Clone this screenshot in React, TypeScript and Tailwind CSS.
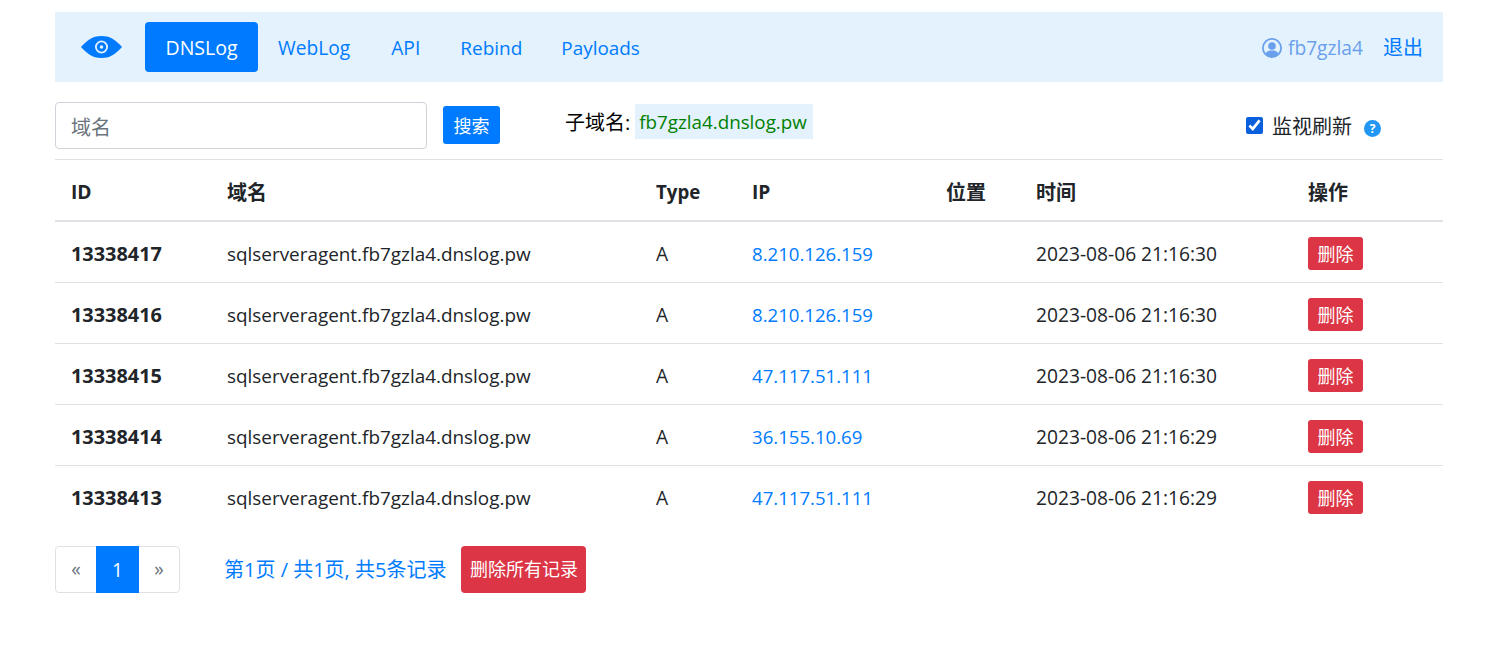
import React from 'react';

const rows = [
  { id: '13338417', ip: '8.210.126.159', time: '2023-08-06 21:16:30' },
  { id: '13338416', ip: '8.210.126.159', time: '2023-08-06 21:16:30' },
  { id: '13338415', ip: '47.117.51.111', time: '2023-08-06 21:16:30' },
  { id: '13338414', ip: '36.155.10.69', time: '2023-08-06 21:16:29' },
  { id: '13338413', ip: '47.117.51.111', time: '2023-08-06 21:16:29' },
];

const headers = [
  { label: 'ID', size: 'text-[19.2px]' },
  { label: '域名', size: 'text-[20px]' },
  { label: 'Type', size: 'text-[18.7px]' },
  { label: 'IP', size: 'text-[19.2px]' },
  { label: '位置', size: 'text-[20px]' },
  { label: '时间', size: 'text-[20px]' },
  { label: '操作', size: 'text-[20px]' },
];

const App: React.FC = () => {
  return (
    <div className="min-h-[666px] bg-white pl-[55px] pr-[46px] pt-3 text-[19.2px] leading-[1.5] text-[#212529] font-['Open_Sans','Noto_Sans_CJK_SC',sans-serif]">
      {/* Top nav */}
      <nav className="flex h-[70px] items-center bg-[#e3f2fd] pl-[26px] pr-5">
        <svg width="41" height="22" viewBox="0 0 41 22" className="mr-[23px]">
          <path d="M0 11 C7 3 13 0 20.5 0 C28 0 34 3 41 11 C34 19 28 22 20.5 22 C13 22 7 19 0 11 Z" fill="#007bff" />
          <circle cx="20.5" cy="11" r="5.6" fill="none" stroke="#e3f2fd" strokeWidth="1.8" />
          <circle cx="20.5" cy="11" r="1.8" fill="#e3f2fd" />
        </svg>
        <a className="flex h-[50px] w-[113px] items-center justify-center rounded-[4px] bg-[#007bff] pt-[2px] text-[19.5px] text-white">DNSLog</a>
        <div className="ml-5 flex pt-[2px] text-[#007bff]">
          <a>WebLog</a>
          <a className="ml-[41px]">API</a>
          <a className="ml-[40px] text-[19px]">Rebind</a>
          <a className="ml-[39px] text-[18.9px]">Payloads</a>
        </div>
        <div className="ml-auto flex items-center">
          <svg width="20" height="20" viewBox="0 0 20 20" className="mr-[6px] mt-[2px]">
            <circle cx="10" cy="10" r="9.1" fill="none" stroke="#6a9fec" strokeWidth="1.8" />
            <circle cx="10" cy="8" r="3.8" fill="#6a9fec" />
            <path d="M3.6 15.6 C5 12.8 7.5 12.4 10 12.4 C12.5 12.4 15 12.8 16.4 15.6 C14.8 17.8 12.5 19 10 19 C7.5 19 5.2 17.8 3.6 15.6 Z" fill="#6a9fec" />
          </svg>
          <span className="pt-[2px] text-[#6a9fec]">fb7gzla4</span>
          <a className="ml-5 pt-[2px] text-[20px] text-[#007bff]">退出</a>
        </div>
      </nav>

      {/* Search row */}
      <div className="flex h-[78px] items-start border-b border-[#dee2e6] pt-5">
        <input
          placeholder="域名"
          className="h-[47px] w-[372px] rounded-[4px] border border-[#ced4da] px-[15px] pt-[4px] text-[20px] placeholder:text-[#6c757d]"
        />
        <button className="ml-4 mt-1 h-[38px] w-[57px] rounded-[3px] bg-[#007bff] pt-[2px] text-[18px] text-white">搜索</button>
        <div className="ml-[65px] mt-[2px] flex items-center">
          <span className="pt-[3px] text-[20px] text-black">子域名:</span>
          <span className="ml-[5px] flex h-[35px] w-[178px] items-center bg-[#e3f2fd] px-1 pt-[2px] text-[18.8px] text-[#008000]">fb7gzla4.dnslog.pw</span>
        </div>
        <div className="ml-auto mr-[62px] mt-[10px] flex items-start">
          <input type="checkbox" defaultChecked className="mt-[5px] h-[17px] w-[17px] accent-[#0a5fdc]" />
          <span className="ml-[9px] text-[20px]">监视刷新</span>
          <span className="ml-3 mt-[8px] flex h-[17px] w-[17px] items-center justify-center rounded-full bg-[#2196f3] text-[12px] font-bold text-white">?</span>
        </div>
      </div>

      {/* Records */}
      <table className="w-full table-fixed border-collapse">
        <colgroup>
          <col className="w-[156px]" />
          <col className="w-[429px]" />
          <col className="w-[96px]" />
          <col className="w-[194px]" />
          <col className="w-[90px]" />
          <col className="w-[272px]" />
          <col />
        </colgroup>
        <thead>
          <tr className="h-[61px] border-b-2 border-[#dee2e6] text-left">
            {headers.map((h) => (
              <th key={h.label} className={`px-4 pt-[5px] font-bold ${h.size}`}>{h.label}</th>
            ))}
          </tr>
        </thead>
        <tbody>
          {rows.map((r) => (
            <tr key={r.id} className="h-[61px] border-b border-[#dee2e6] last:border-b-0">
              <td className="px-4 pt-[5px] text-[19.9px] font-bold">{r.id}</td>
              <td className="px-4 pt-[5px] text-[18.9px]">sqlserveragent.fb7gzla4.dnslog.pw</td>
              <td className="px-4 pt-[5px]">A</td>
              <td className="px-4 pt-[5px] text-[18.6px] text-[#007bff]">{r.ip}</td>
              <td className="px-4"></td>
              <td className="px-4 pt-[5px]">{r.time}</td>
              <td className="px-4 pt-[4px]">
                <button className="h-[33px] w-[55px] rounded-[3px] bg-[#dc3545] pt-[2px] text-[18px] text-white">删除</button>
              </td>
            </tr>
          ))}
        </tbody>
      </table>

      {/* Pagination */}
      <div className="mt-5 flex items-center">
        <div className="flex h-[47px] w-[125px] rounded-[4px] border border-[#dee2e6]">
          <span className="flex w-[40px] items-center justify-center text-[#6c757d]">«</span>
          <span className="-my-px flex w-[43px] items-center justify-center bg-[#007bff] pt-[2px] text-white">1</span>
          <span className="flex flex-1 items-center justify-center text-[#6c757d]">»</span>
        </div>
        <span className="ml-[44px] text-[20px] text-[#007bff]">第1页 / 共1页, 共5条记录</span>
        <button className="ml-[15px] h-[47px] w-[125px] rounded-[4px] bg-[#dc3545] text-[18px] text-white">删除所有记录</button>
      </div>
    </div>
  );
};

export default App;
